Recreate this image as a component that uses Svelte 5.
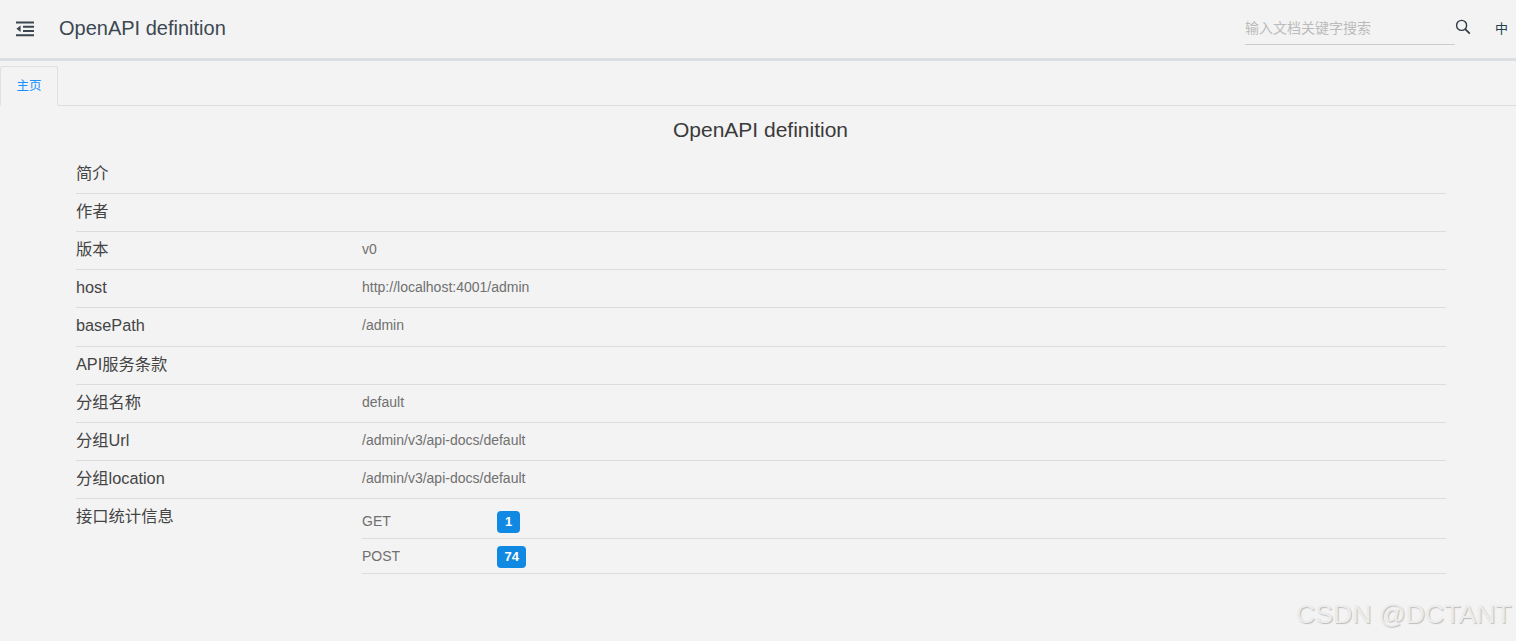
<script lang="ts">
  const rows = [
    { label: '简介', value: '' },
    { label: '作者', value: '' },
    { label: '版本', value: 'v0' },
    { label: 'host', value: 'http://localhost:4001/admin' },
    { label: 'basePath', value: '/admin' },
    { label: 'API服务条款', value: '' },
    { label: '分组名称', value: 'default' },
    { label: '分组Url', value: '/admin/v3/api-docs/default' },
    { label: '分组location', value: '/admin/v3/api-docs/default' },
  ];
  const stats = [
    { method: 'GET', count: 1 },
    { method: 'POST', count: 74 },
  ];
</script>

<div class="page">
  <header class="top">
    <div class="left">
      <svg class="fold" width="18" height="16" viewBox="0 0 18 16" aria-hidden="true">
        <path d="M0 0.5h18v2H0zM7 4.8h11v1.9H7zM7 9h11v1.9H7zM0 13.3h18v2H0zM4.6 4.6v6.4L0.4 7.8z" fill="#3b4650" />
      </svg>
      <span class="name">OpenAPI definition</span>
    </div>
    <div class="right">
      <div class="search"><span>输入文档关键字搜索</span></div>
      <svg class="glass" width="16" height="16" viewBox="0 0 16 16" aria-hidden="true">
        <circle cx="6.6" cy="6.4" r="5" fill="none" stroke="#2f3b46" stroke-width="1.4" />
        <path d="M10.2 10.1l4.6 4.6" stroke="#2f3b46" stroke-width="1.7" fill="none" />
      </svg>
      <span class="lang">中</span>
    </div>
  </header>

  <nav class="tabs">
    <div class="tab">主页</div>
  </nav>

  <main class="content">
    <h1>OpenAPI definition</h1>
    {#each rows as row}
      <div class="row">
        <div class="label">{row.label}</div>
        <div class="value">{row.value}</div>
      </div>
    {/each}
    <div class="row last">
      <div class="label">接口统计信息</div>
      <div class="stats">
        {#each stats as s}
          <div class="stat">
            <span class="method">{s.method}</span>
            <span class="badge">{s.count}</span>
          </div>
        {/each}
      </div>
    </div>
  </main>

  <div class="watermark">CSDN @DCTANT</div>
</div>

<style>
  :global(body) {
    margin: 0;
    background: #f3f3f3;
    overflow: hidden;
  }
  .page {
    position: relative;
    height: 641px;
    overflow: hidden;
    background: #f3f3f3;
    font-family: "Liberation Sans", "Noto Sans CJK SC", sans-serif;
    color: #333;
  }
  .top {
    height: 58px;
    display: flex;
    justify-content: space-between;
    align-items: center;
    border-bottom: 3px solid #dcdfe1;
    box-sizing: content-box;
  }
  .left { display: flex; align-items: center; }
  .fold { margin-left: 16px; }
  .name {
    margin-left: 25px;
    margin-top: -2px;
    font-size: 20px;
    color: #3c4852;
  }
  .right { display: flex; align-items: center; }
  .search {
    width: 210px;
    height: 33px;
    margin-top: -1px;
    box-sizing: border-box;
    border-bottom: 1px solid #ccc;
    font-size: 14px;
    line-height: 32px;
    color: #bbb;
  }
  .glass { position: relative; top: -2px; }
  .lang {
    margin-left: 24px;
    margin-right: 8px;
    margin-top: -3px;
    font-size: 13px;
    color: #24404f;
  }
  .tabs {
    height: 45px;
    box-sizing: border-box;
    border-bottom: 1px solid #dddddd;
    padding-top: 5px;
  }
  .tab {
    width: 58px;
    height: 40px;
    box-sizing: border-box;
    border: 1px solid #e0e0e0;
    border-bottom: 1px solid #f3f3f3;
    border-radius: 3px 3px 0 0;
    text-align: center;
    font-size: 12.5px;
    line-height: 38px;
    color: #1890ff;
  }
  .content { padding: 0 70px 0 76px; }
  h1 {
    margin: 0;
    height: 49.9px;
    font-size: 21px;
    font-weight: 400;
    line-height: 48px;
    text-align: center;
    color: #3a3a3a;
    padding-right: 1px;
  }
  .row {
    display: flex;
    height: 38.125px;
    box-sizing: border-box;
    border-bottom: 1px solid #dcdcdc;
    line-height: 35px;
  }
  .row.last { height: auto; border-bottom: 0; }
  .label {
    width: 286px;
    flex: none;
    font-size: 16.3px;
    color: #444;
  }
  .value {
    font-size: 14px;
    color: #707070;
  }
  .stats { flex: 1; padding-top: 5px; }
  .stat {
    display: flex;
    align-items: center;
    height: 35px;
    padding-top: 2px;
    box-sizing: border-box;
    border-bottom: 1px solid #dcdcdc;
  }
  .method {
    width: 135px;
    margin-top: -2px;
    font-size: 14px;
    color: #707070;
  }
  .badge {
    min-width: 8px;
    padding: 0 7.5px;
    height: 22px;
    line-height: 22px;
    border-radius: 4px;
    background: #1089e3;
    color: #fff;
    font-size: 13px;
    font-weight: 700;
    text-align: center;
  }
  .watermark {
    position: absolute;
    left: 1296px;
    top: 597px;
    font-size: 26.6px;
    line-height: 34px;
    white-space: nowrap;
    color: #ececec;
    text-shadow: 1px 1px 1px #bdbdbd;
  }
</style>
